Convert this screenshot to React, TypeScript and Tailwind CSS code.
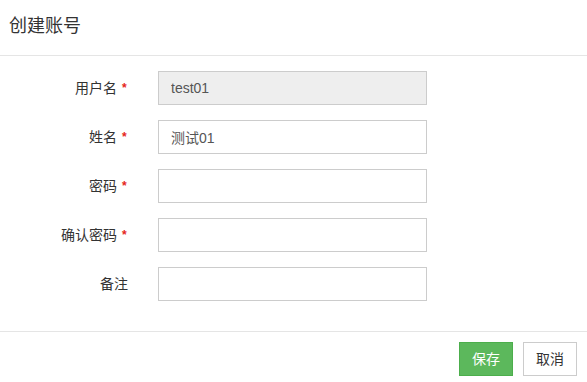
import React from "react";

const rows: { label: string; required: boolean; value: string; disabled?: boolean }[] = [
  { label: "用户名", required: true, value: "test01", disabled: true },
  { label: "姓名", required: true, value: "测试01" },
  { label: "密码", required: true, value: "" },
  { label: "确认密码", required: true, value: "" },
  { label: "备注", required: false, value: "" },
];

export default function App() {
  return (
    <div
      className="w-[587px] h-[382px] bg-white overflow-hidden text-[#333]"
      style={{ fontFamily: '"Helvetica Neue", "Liberation Sans", "Noto Sans CJK SC", sans-serif' }}
    >
      <div className="h-[56px] border-b border-[#e5e5e5] pl-[9px] pt-[13px]">
        <h1 className="text-[18px] leading-[26px] text-[#333]">创建账号</h1>
      </div>
      <div className="pt-[15px] flex flex-col gap-[15px]">
        {rows.map((r) => (
          <div key={r.label} className="flex items-center h-[34px]">
            <div className="w-[128px] text-right text-[14px] leading-[20px] text-[#333]">
              {r.label}
              {r.required && (
                <span className="inline-block ml-[5px] text-[12px] font-bold text-[#e52420] relative -top-[1px] w-[6px] text-left">*</span>
              )}
            </div>
            <input
              readOnly
              disabled={r.disabled}
              value={r.value}
              className={
                "ml-[30px] w-[269px] h-[34px] border border-[#cccccc] px-[12px] text-[14px] text-[#555] outline-none " +
                (r.disabled ? "bg-[#eeeeee]" : "bg-white")
              }
            />
          </div>
        ))}
      </div>
      <div className="mt-[30px] border-t border-[#e5e5e5] pt-[10px] pr-[10px] flex justify-end gap-[10px]">
        <button className="w-[54px] h-[34px] bg-[#5cb85c] border border-[#4cae4c] text-white text-[14px]">保存</button>
        <button className="w-[54px] h-[34px] bg-white border border-[#cccccc] text-[#333] text-[14px]">取消</button>
      </div>
    </div>
  );
}
